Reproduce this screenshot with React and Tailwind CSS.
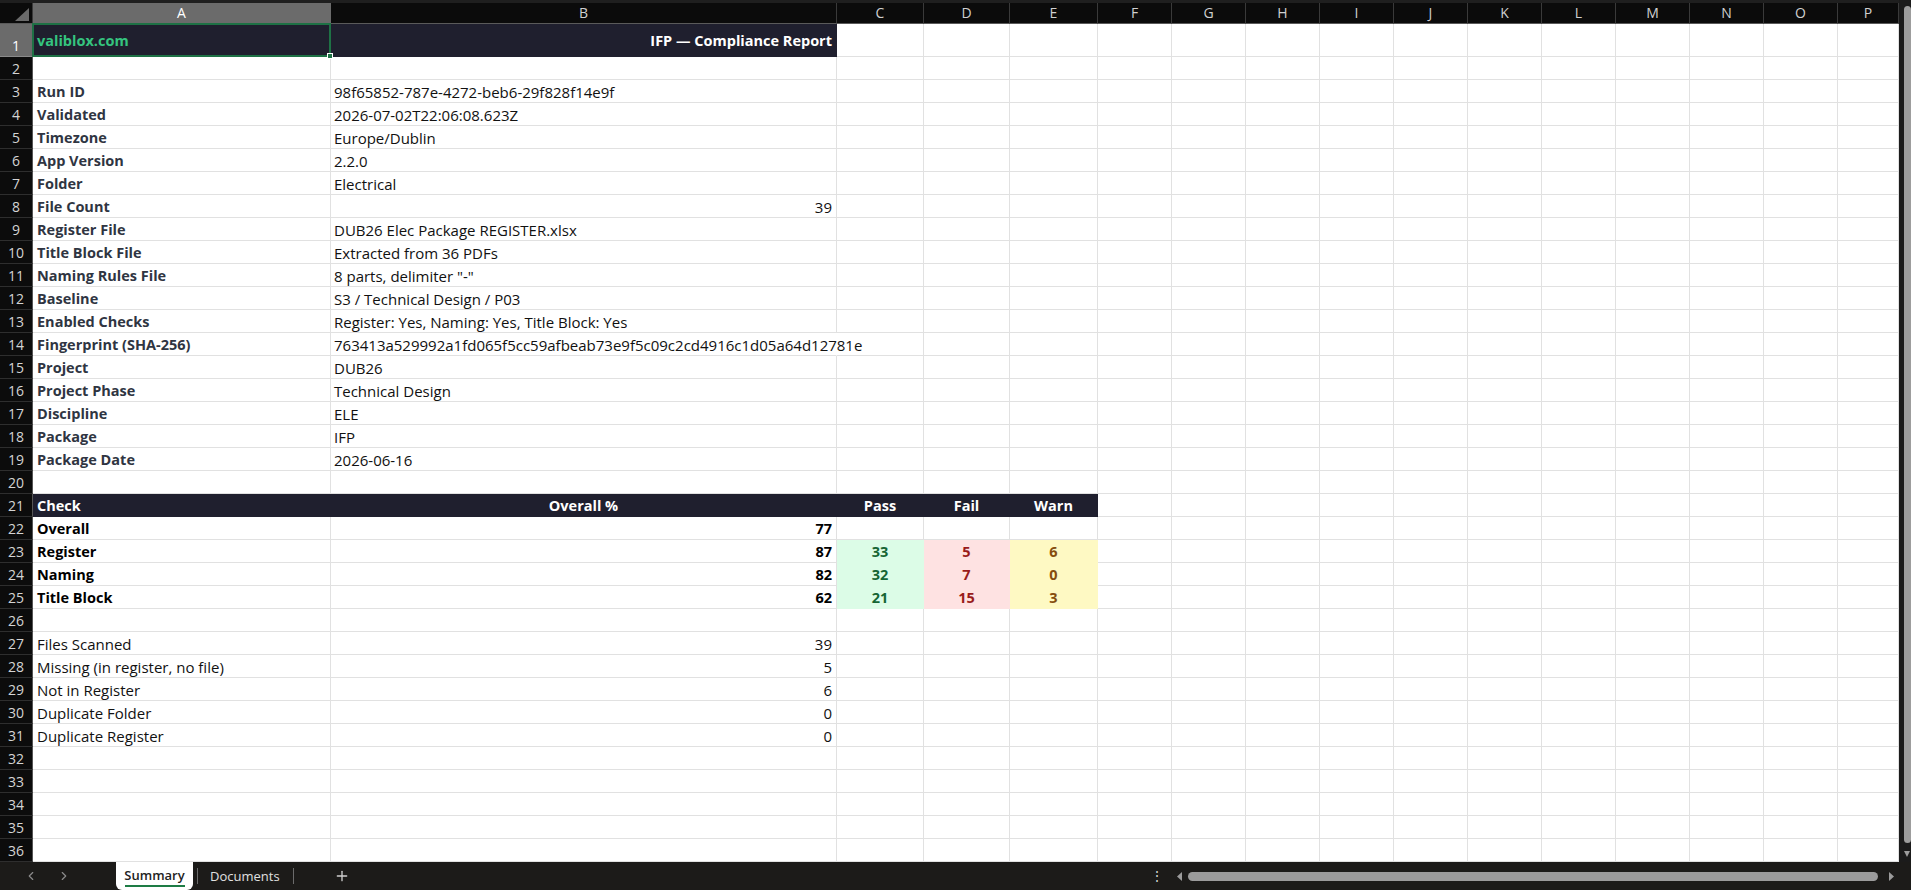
import React from 'react';
import { ChevronLeft, ChevronRight, Plus } from 'lucide-react';

const GRID = 'grid grid-cols-[33px_298px_506px_87px_86px_88px_repeat(10,74px)_61px]';
const LETTERS = ['A', 'B', 'C', 'D', 'E', 'F', 'G', 'H', 'I', 'J', 'K', 'L', 'M', 'N', 'O', 'P'];

const TONES = {
  plain: 'bg-white border-[#e1e1e1]',
  spill: 'bg-white border-b-[#e1e1e1] border-r-white',
  dark: 'bg-[#1f1f2e] border-[#1f1f2e]',
  pass: 'bg-[#dcfce7] border-[#dcfce7]',
  fail: 'bg-[#fee2e2] border-[#fee2e2]',
  warn: 'bg-[#fef9c3] border-[#fef9c3]',
};

const meta = [
  ['Run ID', '98f65852-787e-4272-beb6-29f828f14e9f'],
  ['Validated', '2026-07-02T22:06:08.623Z'],
  ['Timezone', 'Europe/Dublin'],
  ['App Version', '2.2.0'],
  ['Folder', 'Electrical'],
  ['File Count', '39', true],
  ['Register File', 'DUB26 Elec Package REGISTER.xlsx'],
  ['Title Block File', 'Extracted from 36 PDFs'],
  ['Naming Rules File', '8 parts, delimiter "-"'],
  ['Baseline', 'S3 / Technical Design / P03'],
  ['Enabled Checks', 'Register: Yes, Naming: Yes, Title Block: Yes'],
  ['Fingerprint (SHA-256)', '763413a529992a1fd065f5cc59afbeab73e9f5c09c2cd4916c1d05a64d12781e'],
  ['Project', 'DUB26'],
  ['Project Phase', 'Technical Design'],
  ['Discipline', 'ELE'],
  ['Package', 'IFP'],
  ['Package Date', '2026-06-16'],
];

const checks = [
  ['Overall', 77],
  ['Register', 87, 33, 5, 6],
  ['Naming', 82, 32, 7, 0],
  ['Title Block', 62, 21, 15, 3],
];

const stats = [
  ['Files Scanned', 39],
  ['Missing (in register, no file)', 5],
  ['Not in Register', 6],
  ['Duplicate Folder', 0],
  ['Duplicate Register', 0],
];

// bold text in Calibri runs narrower than Open Sans, so bold cells get a smaller size
const B = 'font-bold text-[14.5px]';
const LABEL = `pl-[4px] ${B} text-[#2f3542]`;
const VALUE = 'pl-[3px] text-[#111]';
const NUM = 'justify-end pr-[4px] text-[#111]';

const blank = () => LETTERS.map(() => ({}));

function buildRows() {
  const rows = [];
  const r1 = blank();
  r1[0] = { t: 'valiblox.com', tone: 'dark', cls: `pl-[4px] ${B} text-[#35c47f]`, sel: true };
  r1[1] = { t: 'IFP — Compliance Report', tone: 'dark', cls: `justify-end pr-[4px] ${B} text-white` };
  rows.push(r1);
  rows.push(blank());
  meta.forEach(([label, value, isNum]) => {
    const r = blank();
    r[0] = { t: label, cls: LABEL };
    const long = value.length > 60;
    r[1] = { t: value, cls: isNum ? NUM : VALUE, tone: long ? 'spill' : 'plain', spill: long };
    rows.push(r);
  });
  rows.push(blank());
  const head = blank();
  head[0] = { t: 'Check', tone: 'dark', cls: `pl-[4px] ${B} text-white` };
  head[1] = { t: 'Overall %', tone: 'dark', cls: `justify-center ${B} text-white` };
  head[2] = { t: 'Pass', tone: 'dark', cls: `justify-center ${B} text-white` };
  head[3] = { t: 'Fail', tone: 'dark', cls: `justify-center ${B} text-white` };
  head[4] = { t: 'Warn', tone: 'dark', cls: `justify-center ${B} text-white` };
  rows.push(head);
  checks.forEach(([label, pct, pass, fail, warn]) => {
    const r = blank();
    r[0] = { t: label, cls: `pl-[4px] ${B} text-black` };
    r[1] = { t: pct, cls: `justify-end pr-[4px] ${B} text-black` };
    if (pass !== undefined) {
      r[2] = { t: pass, tone: 'pass', cls: `justify-center ${B} text-[#166534]` };
      r[3] = { t: fail, tone: 'fail', cls: `justify-center ${B} text-[#991b1b]` };
      r[4] = { t: warn, tone: 'warn', cls: `justify-center ${B} text-[#854d0e]` };
    }
    rows.push(r);
  });
  rows.push(blank());
  stats.forEach(([label, n]) => {
    const r = blank();
    r[0] = { t: label, cls: 'pl-[4px] text-[#111]' };
    r[1] = { t: n, cls: NUM };
    rows.push(r);
  });
  while (rows.length < 36) rows.push(blank());
  return rows;
}

function Cell({ t, tone = 'plain', cls = '', spill, sel }) {
  return (
    <div
      className={`relative flex items-center whitespace-nowrap border-b border-r pt-[2px] ${TONES[tone]} ${
        spill || sel ? 'z-10 overflow-visible' : 'overflow-hidden'
      } ${cls}`}
    >
      {t}
      {sel && (
        <div className="absolute -left-px -top-px -right-px -bottom-px border-2 border-[#1e7145]">
          <div className="absolute -right-[4px] -bottom-[4px] h-[6px] w-[6px] border border-white bg-[#1e7145]" />
        </div>
      )}
    </div>
  );
}

function RowHead({ n, selected }) {
  return (
    <div
      className={`flex justify-center border-b border-r border-r-[#555] text-[14px] font-['Open_Sans',sans-serif] ${
        selected ? 'items-end bg-[#6b6b6b] border-b-[#8a8a8a] text-white' : 'items-center pt-[2px] bg-[#0c0c0c] border-b-[#2e2e2e] text-[#d4d4d4]'
      }`}
    >
      {n}
    </div>
  );
}

export default function App() {
  const rows = buildRows();
  return (
    <div className="flex h-[890px] w-[1911px] flex-col overflow-hidden bg-[#1c1b19] font-['Open_Sans',sans-serif] text-[15px] leading-[20px]">
      <div className="flex h-[862px]">
        <div className="flex w-[1899px] flex-col">
          <div className="h-[3px] bg-[#1f1f1f]" />
          <div className={`${GRID} h-[21px] font-['Liberation_Sans_Narrow','Open_Sans',sans-serif] text-[14px]`}>
            <div className="relative border-b border-r border-b-[#5a5a5a] border-r-[#3a3a3a] bg-[#0b0b0b]">
              <svg className="absolute right-[3px] bottom-[2px]" width="14" height="13" viewBox="0 0 14 13">
                <polygon points="14,0 14,13 0,13" fill="#6b6b6b" />
              </svg>
            </div>
            {LETTERS.map((l, i) => (
              <div
                key={l}
                className={`flex items-center justify-center border-b border-r ${
                  i === 0
                    ? 'bg-[#6b6b6b] border-b-[#9a9a9a] border-r-[#6b6b6b] text-white'
                    : 'bg-[#0b0b0b] border-b-[#5a5a5a] border-r-[#3a3a3a] text-[#d0d0d0]'
                }`}
              >
                {l}
              </div>
            ))}
          </div>
          {rows.map((cells, i) => (
            <div key={i} className={`${GRID} ${i === 0 ? 'h-[33px]' : 'h-[23px]'}`}>
              <RowHead n={i + 1} selected={i === 0} />
              {cells.map((c, j) => (
                <Cell key={j} {...c} />
              ))}
            </div>
          ))}
        </div>
        <div className="flex w-[12px] flex-col items-end bg-[#1b1b1b] pt-[6px]">
          <div className="h-[837px] w-[7px] rounded-[4px] bg-[#9d9d9d]" />
          <svg className="mt-[8px] mr-[1px]" width="6" height="6" viewBox="0 0 6 6">
            <polygon points="0,0 6,0 3,6" fill="#9d9d9d" />
          </svg>
        </div>
      </div>

      <div className="flex h-[28px] items-center text-[13px] font-['Open_Sans',sans-serif]">
        <div className="flex w-[116px] items-center self-stretch">
          <ChevronLeft size={14} className="ml-[24px] text-[#8a8a8a]" />
          <ChevronRight size={14} className="ml-[19px] text-[#8a8a8a]" />
        </div>
        <div className="flex h-full w-[77px] flex-col items-center justify-center rounded-b-[6px] bg-white">
          <span className="font-semibold text-[#222]">Summary</span>
          <div className="h-[2px] w-[60px] bg-[#1e7c45]" />
        </div>
        <div className="ml-[4px] h-[16px] w-px bg-[#6b6b6b]" />
        <span className="ml-[12px] text-[#e0e0e0]">Documents</span>
        <div className="ml-[13px] h-[16px] w-px bg-[#6b6b6b]" />
        <Plus size={16} className="ml-[40px] text-[#cfcfcf]" />
        <div className="ml-auto flex w-[761px] items-center">
          <span className="w-[10px] text-center text-[14px] leading-none text-[#cfcfcf]">⋮</span>
          <svg className="ml-[17px]" width="5" height="9" viewBox="0 0 5 9">
            <polygon points="5,0 5,9 0,4.5" fill="#9b9b9b" />
          </svg>
          <div className="ml-[6px] h-[9px] w-[690px] rounded-full bg-[#9b9b9b]" />
          <svg className="ml-[11px]" width="5" height="9" viewBox="0 0 5 9">
            <polygon points="0,0 0,9 5,4.5" fill="#9b9b9b" />
          </svg>
        </div>
      </div>
    </div>
  );
}
